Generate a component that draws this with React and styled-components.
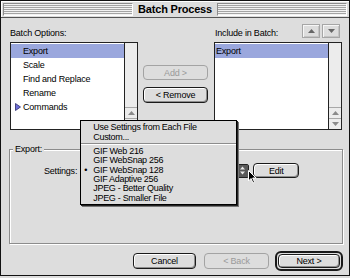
import React from "react";
import styled, { createGlobalStyle } from "styled-components";

const GlobalStyle = createGlobalStyle`
  html, body { margin: 0; padding: 0; background: #dddddd; }
  body {
    font-family: "Liberation Sans", Arial, sans-serif;
    font-size: 9px;
    color: #000;
  }
  * { box-sizing: border-box; }
`;

const Window = styled.div`
  width: 350px;
  height: 276px;
  border: 1px solid #111;
  background: #dddddd;
  display: flex;
  flex-direction: column;
`;

const TitleBar = styled.div`
  height: 17px;
  border-bottom: 1px solid #555;
  box-shadow: inset 1px 1px #fff;
  display: flex;
  align-items: center;
  gap: 5px;
  padding: 0 2px;
`;

const Stripes = styled.div`
  flex: 1;
  height: 13px;
  border: 1px solid;
  border-color: #8c8c8c #fff #fff #8c8c8c;
  background: repeating-linear-gradient(to bottom, #f2f2f2 0 1px, #a4a4a4 1px 2px);
`;

const Title = styled.div`
  font-size: 11px;
  font-weight: bold;
  letter-spacing: -0.2px;
  line-height: 14px;
`;

const Body = styled.div`
  flex: 1;
  padding: 4px 6px 0 8px;
  display: flex;
  flex-direction: column;
`;

const TopRow = styled.div`
  display: flex;
  padding-left: 1px;
`;

const Column = styled.div`
  width: 128px;
  display: flex;
  flex-direction: column;
  gap: 4px;
`;

const Header = styled.div`
  height: 16px;
  display: flex;
  align-items: flex-end;
  gap: 2px;
  padding-left: ${p => p.$pad || 0}px;
`;

const Label = styled.span`
  line-height: 10px;
  letter-spacing: -0.2px;
  margin-right: ${p => (p.$push ? "auto" : "0")};
`;

const ArrowButton = styled.button`
  width: 18px;
  height: 14px;
  padding: 0;
  border: 1px solid #a6a6a6;
  background: #dddddd;
  box-shadow: inset 1px 1px #f6f6f6, inset -1px -1px #c4c4c4;
  display: flex;
  align-items: center;
  justify-content: center;
  &:last-child { margin-right: 2px; }
`;

const List = styled.div`
  height: 88px;
  border: 1px solid #222;
  background: #fff;
  display: flex;
`;

const Rows = styled.div`
  flex: 1;
  padding-top: 1px;
`;

const Row = styled.div`
  height: 14px;
  display: flex;
  align-items: center;
  padding-left: ${p => p.$indent}px;
  background: ${p => (p.$selected ? "#9aa7dd" : "transparent")};
  letter-spacing: -0.2px;
`;

const Disclosure = styled.span`
  width: 12px;
  margin-left: -12px;
  padding-left: 4px;
  display: flex;
  align-items: center;
`;

const Scrollbar = styled.div`
  width: 13px;
  border-left: 1px solid #222;
  background: #ececec;
  display: flex;
  flex-direction: column;
  justify-content: flex-end;
`;

const ScrollArrow = styled.div`
  height: 11px;
  border-top: 1px solid #a8a8a8;
  display: flex;
  align-items: center;
  justify-content: center;
`;

const Middle = styled.div`
  width: 65px;
  margin: 0 6px 0 5px;
  display: flex;
  flex-direction: column;
  gap: 7px;
  padding-top: 43px;
`;

const Button = styled.button`
  font-family: inherit;
  font-size: 9px;
  letter-spacing: -0.2px;
  width: ${p => p.$w}px;
  height: ${p => p.$h || 15}px;
  margin-left: ${p => p.$ml || 0}px;
  padding: 0;
  border: 1px solid ${p => (p.disabled ? "#a3a3a3" : "#1a1a1a")};
  border-radius: 4px;
  background: #dddddd;
  color: ${p => (p.disabled ? "#9a9a9a" : "#000")};
  box-shadow: ${p =>
    p.disabled ? "none" : "inset 1px 1px #fff, inset -1px -1px #8e8e8e"};
  display: flex;
  align-items: center;
  justify-content: center;
`;

const Group = styled.fieldset`
  margin: 14px 0 0 0;
  padding: 9px 0 0 0;
  height: 100px;
  min-width: 0;
  border: 1px solid #8c8c8c;
  box-shadow: inset 1px 1px #fff, 1px 1px 0 #fff;
`;

const Legend = styled.legend`
  margin-left: 3px;
  padding: 0 2px;
  line-height: 10px;
  background: #dddddd;
  letter-spacing: -0.2px;
`;

const SettingsRow = styled.div`
  display: flex;
  align-items: center;
  gap: 4px;
  padding-left: 34px;
`;

const Popup = styled.div`
  position: relative;
  width: 168px;
  height: 14px;
  border: 1px solid #222;
  border-radius: 2px;
  background: #dddddd;
  display: flex;
  justify-content: flex-end;
`;

const PopupArrows = styled.div`
  width: 12px;
  background: #5a5a5a;
  display: flex;
  align-items: center;
  justify-content: center;
`;

const Menu = styled.div`
  position: absolute;
  left: -2px;
  top: -45px;
  width: 157px;
  padding: 1px 0 2px;
  border: 1px solid #000;
  background: #dddddd;
  box-shadow: 1px 1px 0 #222, 2px 2px 0 #777;
  z-index: 5;
`;

const MenuItem = styled.div`
  height: ${p => p.$h}px;
  display: flex;
  align-items: center;
  letter-spacing: -0.3px;
  white-space: nowrap;
`;

const Mark = styled.span`
  width: 12px;
  padding-left: 3px;
  font-size: 9px;
`;

const Separator = styled.div`
  height: 5px;
  display: flex;
  align-items: center;
  &::after {
    content: "";
    flex: 1;
    border-top: 1px solid #8c8c8c;
    border-bottom: 1px solid #fff;
  }
`;

const Cursor = styled.svg`
  position: absolute;
  left: 166px;
  top: 5px;
  z-index: 6;
`;

const Footer = styled.div`
  margin-top: 7px;
  height: 20px;
  display: flex;
  align-items: center;
  justify-content: flex-end;
`;

const DefaultRing = styled.div`
  padding: 1px;
  border: 2px solid #1a1a1a;
  border-radius: 6px;
  margin-left: 6px;
`;

const Up = ({ c = "#666" }) => (
  <svg width="7" height="4" viewBox="0 0 7 4">
    <path d="M3.5 0 L7 4 L0 4 Z" fill={c} />
  </svg>
);
const Down = ({ c = "#666" }) => (
  <svg width="7" height="4" viewBox="0 0 7 4">
    <path d="M0 0 L7 0 L3.5 4 Z" fill={c} />
  </svg>
);

const Scroll = ({ both }) => (
  <Scrollbar>
    <ScrollArrow>
      <Up c="#8a8a8a" />
    </ScrollArrow>
    {both && (
      <ScrollArrow>
        <Down c="#8a8a8a" />
      </ScrollArrow>
    )}
  </Scrollbar>
);

const options = ["Export", "Scale", "Find and Replace", "Rename", "Commands"];
const menuTop = ["Use Settings from Each File", "Custom..."];
const menuBottom = [
  "GIF Web 216",
  "GIF WebSnap 256",
  "GIF WebSnap 128",
  "GIF Adaptive 256",
  "JPEG - Better Quality",
  "JPEG - Smaller File",
];

export default function App() {
  return (
    <>
      <GlobalStyle />
      <Window>
        <TitleBar>
          <Stripes />
          <Title>Batch Process</Title>
          <Stripes />
        </TitleBar>
        <Body>
          <TopRow>
            <Column>
              <Header>
                <Label $push>Batch Options:</Label>
              </Header>
              <List>
                <Rows>
                  {options.map((o, i) => (
                    <Row key={o} $indent={12} $selected={i === 0}>
                      {o === "Commands" && (
                        <Disclosure>
                          <svg width="6" height="8" viewBox="0 0 6 8">
                            <path d="M0.5 0.5 L5.5 4 L0.5 7.5 Z" fill="#6f6fd8" stroke="#2a2a6a" strokeWidth="0.8" />
                          </svg>
                        </Disclosure>
                      )}
                      {o}
                    </Row>
                  ))}
                </Rows>
                <Scroll both />
              </List>
            </Column>
            <Middle>
              <Button $w={65} disabled>Add &gt;</Button>
              <Button $w={65} $h={16}>&lt; Remove</Button>
            </Middle>
            <Column>
              <Header $pad={1}>
                <Label $push>Include in Batch:</Label>
                <ArrowButton><Up /></ArrowButton>
                <ArrowButton><Down /></ArrowButton>
              </Header>
              <List>
                <Rows>
                  <Row $indent={1} $selected>Export</Row>
                </Rows>
                <Scroll both />
              </List>
            </Column>
          </TopRow>
          <Group>
            <Legend>Export:</Legend>
            <SettingsRow>
              <Label>Settings:</Label>
              <Popup>
                <PopupArrows>
                  <svg width="5" height="9" viewBox="0 0 5 9">
                    <path d="M2.5 0.5 L5 3.5 L0 3.5 Z M0 5.5 L5 5.5 L2.5 8.5 Z" fill="#e8e8e8" />
                  </svg>
                </PopupArrows>
                <Menu>
                  {menuTop.map(m => (
                    <MenuItem key={m} $h={10}>
                      <Mark />
                      {m}
                    </MenuItem>
                  ))}
                  <Separator />
                  {menuBottom.map(m => (
                    <MenuItem key={m} $h={9.3}>
                      <Mark>{m === "GIF WebSnap 128" ? "•" : ""}</Mark>
                      {m}
                    </MenuItem>
                  ))}
                </Menu>
                <Cursor width="9" height="14" viewBox="0 0 9 14">
                  <path d="M0.5 0.5 L0.5 11 L3 8.5 L5 13 L6.6 12.3 L4.7 8 L8 8 Z" fill="#000" stroke="#fff" strokeWidth="1" />
                </Cursor>
              </Popup>
              <Button $w={46}>Edit</Button>
            </SettingsRow>
          </Group>
          <Footer>
            <Button $w={63} $h={16}>Cancel</Button>
            <Button $w={65} $h={16} $ml={8} disabled>&lt; Back</Button>
            <DefaultRing>
              <Button $w={62} $h={14}>Next &gt;</Button>
            </DefaultRing>
          </Footer>
        </Body>
      </Window>
    </>
  );
}
